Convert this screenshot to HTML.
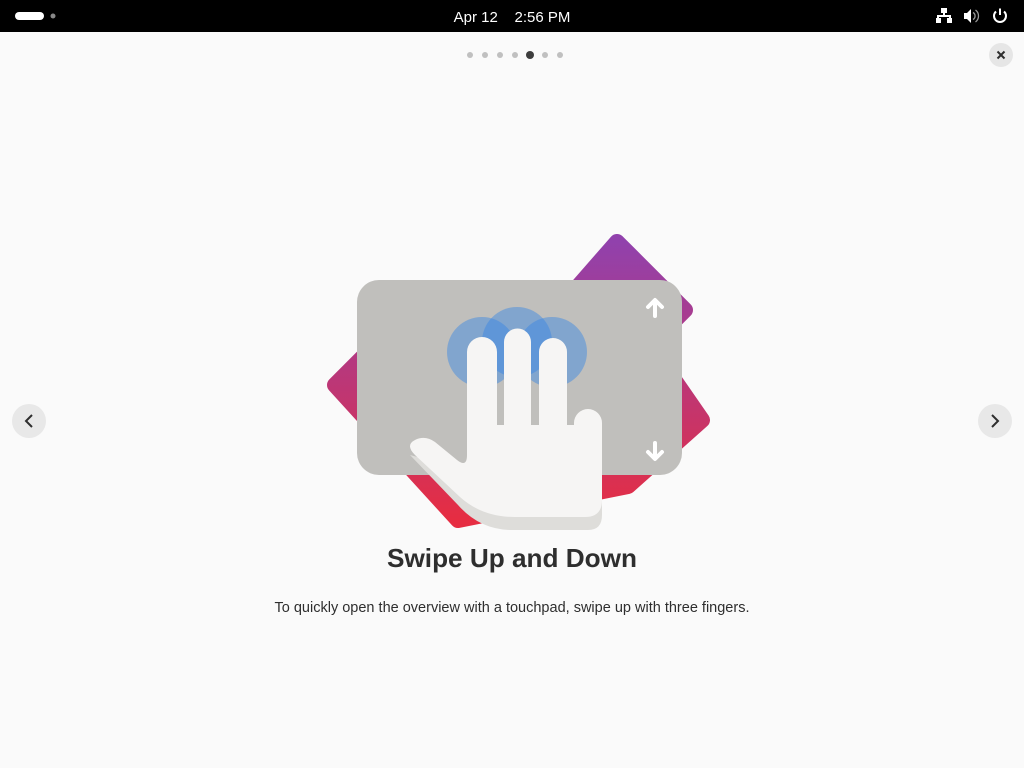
<!DOCTYPE html>
<html><head><style>
html,body{margin:0;padding:0;width:1024px;height:768px;overflow:hidden;background:#fafafa;font-family:"Liberation Sans",sans-serif;}
.top{position:absolute;left:0;top:0;width:1024px;height:32px;background:#000;}
</style></head><body>
<div class="top"></div>
<svg width="1024" height="768" style="position:absolute;left:0;top:0">
<defs>
<linearGradient id="g" x1="0" y1="0" x2="0" y2="1">
<stop offset="0" stop-color="#9141ac"/><stop offset="1" stop-color="#e62d42"/>
</linearGradient>
</defs>
<rect x="15" y="12" width="29" height="8" rx="4" fill="#fff"/>
<circle cx="53" cy="16" r="2.5" fill="#888"/>
<text x="512" y="22" fill="#fff" font-size="15" text-anchor="middle" font-family="Liberation Sans">Apr 12&#160;&#160;&#160;&#160;2:56 PM</text>
<g fill="#fff">
<rect x="941" y="8" width="6" height="5"/><rect x="943" y="13" width="2" height="3"/>
<rect x="937" y="15" width="14" height="2"/><rect x="937" y="15" width="2" height="3"/><rect x="949" y="15" width="2" height="3"/>
<rect x="936" y="18" width="5" height="5"/><rect x="947" y="18" width="5" height="5"/>
<path d="M964 13h3l4-4v14l-4-4h-3z"/>
</g>
<path d="M973 12.5a4 4 0 0 1 0 7M975.5 10a7.5 7.5 0 0 1 0 12" stroke="#fff" stroke-width="1.3" fill="none" opacity=".6"/>
<path d="M996 11.5a6 6 0 1 0 8 0" stroke="#fff" stroke-width="2" fill="none"/>
<line x1="1000" y1="8.5" x2="1000" y2="15" stroke="#fff" stroke-width="2"/>
<g fill="#c0c0c0"><circle cx="470" cy="55" r="3"/><circle cx="485" cy="55" r="3"/><circle cx="500" cy="55" r="3"/><circle cx="515" cy="55" r="3"/><circle cx="545" cy="55" r="3"/><circle cx="560" cy="55" r="3"/></g>
<circle cx="530" cy="55" r="4" fill="#3d3d3d"/>
<circle cx="1001" cy="55" r="12" fill="#e6e6e6"/>
<path d="M997.5 51.5l7 7M1004.5 51.5l-7 7" stroke="#2e2e2e" stroke-width="2"/>
<circle cx="29" cy="421" r="17" fill="#e8e8e8"/>
<path d="M32 415l-6 6 6 6" stroke="#2e2e2e" stroke-width="2" fill="none"/>
<circle cx="995" cy="421" r="17" fill="#e8e8e8"/>
<path d="M992 415l6 6-6 6" stroke="#2e2e2e" stroke-width="2" fill="none"/>
<polygon points="617,242 685,310 650,345 702,420 628,486 458,520 335,385 390,330 575,290" fill="url(#g)" stroke="url(#g)" stroke-width="16" stroke-linejoin="round"/>
<rect x="357" y="280" width="325" height="195" rx="22" fill="#c0bfbc"/>
<g fill="#3584e4" fill-opacity=".45"><circle cx="482" cy="352" r="35"/><circle cx="552" cy="352" r="35"/><circle cx="517" cy="342" r="35"/></g>
<path d="M648 307l7-7 7 7M655 301v15" stroke="#fff" stroke-width="4" fill="none" stroke-linecap="round" stroke-linejoin="round"/>
<path d="M648 452l7 7 7-7M655 458v-15" stroke="#fff" stroke-width="4" fill="none" stroke-linecap="round" stroke-linejoin="round"/>
<path d="M410 455 L458 505 Q480 530 512 530 L588 530 Q602 530 602 515 L602 480 L466 470 Z" fill="#deddda"/>
<path fill="#f6f5f4" d="M467 352a15 15 0 0 1 30 0V425h7V342a13.5 13.5 0 0 1 27 0V425h8V352a14 14 0 0 1 28 0V425h7V423a14 14 0 0 1 28 0V500Q602 517 585 517H515Q482 517 460 497L415 455Q405 445 415 440Q425 435 435 442L457 460Q467 468 467 455Z"/>
<text x="512" y="567" text-anchor="middle" font-size="26" font-weight="bold" fill="#2e2e2e" textLength="250" lengthAdjust="spacingAndGlyphs" font-family="Liberation Sans">Swipe Up and Down</text>
<text x="512" y="612" text-anchor="middle" font-size="15" fill="#2e2e2e" textLength="475" lengthAdjust="spacingAndGlyphs" font-family="Liberation Sans">To quickly open the overview with a touchpad, swipe up with three fingers.</text>
</svg>
</body></html>
